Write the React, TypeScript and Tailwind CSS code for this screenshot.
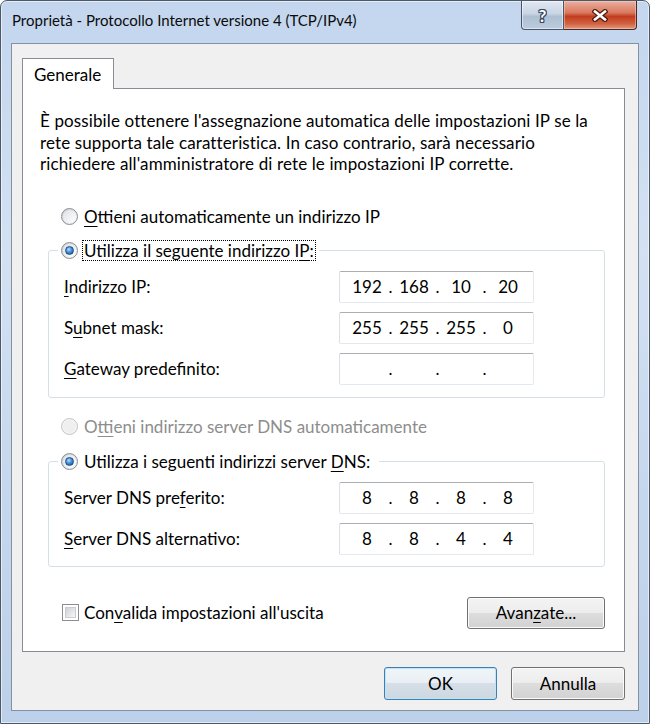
import React, { Fragment } from "react";

function U({ children }: { children: React.ReactNode }) {
  return <span className="underline decoration-1 underline-offset-[3px]">{children}</span>;
}

function Radio({ checked, disabled }: { checked?: boolean; disabled?: boolean }) {
  return (
    <span
      className={
        "flex h-[17px] w-[17px] shrink-0 items-center justify-center rounded-full border " +
        (disabled
          ? "border-[#c4c4c4] bg-[#f4f4f4]"
          : "border-[#8a8e94] bg-linear-to-br from-[#c7ccd2] to-[#fbfbfb]")
      }
    >
      <span
        className={
          "flex h-[13px] w-[13px] items-center justify-center rounded-full " +
          (disabled ? "bg-[#efefef]" : "bg-linear-to-br from-[#dfe1e4] to-[#ffffff]")
        }
      >
        {checked && (
          <span className="h-[9px] w-[9px] rounded-full border border-[#1b4f8c] bg-[radial-gradient(circle_at_40%_35%,#b9e2ff_0%,#4c95de_40%,#14498c_100%)]" />
        )}
      </span>
    </span>
  );
}

function Checkbox() {
  return (
    <span className="flex h-[17px] w-[17px] shrink-0 items-center justify-center border border-[#8a8e94] bg-white">
      <span className="block h-[11px] w-[11px] border border-[#c9ccd1] bg-linear-to-br from-[#cdd1d6] to-[#f7f7f7]" />
    </span>
  );
}

function IpBox({ v }: { v: string[] }) {
  return (
    <div className="flex h-[32px] w-[195px] items-center rounded-[2px] border border-[#abadb3] border-b-[#e3e9ef] border-l-[#dbdfe6] border-r-[#e3e9ef] bg-white pl-[9px]">
      {v.map((s, i) => (
        <Fragment key={i}>
          {i > 0 && <span className="w-[11px] text-center">.</span>}
          <span className="w-[36px] text-center">{s}</span>
        </Fragment>
      ))}
    </div>
  );
}

function Row({ label, v }: { label: React.ReactNode; v: string[] }) {
  return (
    <div className="flex items-center justify-between pl-[15px] pr-[70px]">
      <span>{label}</span>
      <IpBox v={v} />
    </div>
  );
}

function Btn({ children, def, w }: { children: React.ReactNode; def?: boolean; w: string }) {
  return (
    <div
      className={
        "flex h-[33px] items-center justify-center rounded-[3px] border " +
        w +
        " " +
        (def
          ? "border-[#3c7fb1] bg-[linear-gradient(#f0f5f9,#e8eef3_50%,#d6dfe7_50%,#ccd7e0)] shadow-[inset_0_0_0_1px_#bfe3f8]"
          : "border-[#707070] bg-[linear-gradient(#f4f4f4,#ececec_50%,#dddddd_50%,#d2d2d2)] shadow-[inset_0_0_0_1px_#fbfbfb]")
      }
    >
      {children}
    </div>
  );
}

export default function App() {
  return (
    <div className="h-[724px] w-[650px] overflow-hidden bg-white [font-family:Lato,sans-serif] text-[17px] leading-[21px] text-black">
      <div className="flex h-[724px] w-[650px] flex-col rounded-t-[7px] border border-[#4d5968] bg-[linear-gradient(180deg,#c3d6ee_0%,#d3e1f2_35%,#c5d7ed_70%,#bcd0e9_100%)] shadow-[inset_0_0_0_1px_rgba(255,255,255,0.55)]">
        {/* title bar */}
        <div className="flex h-[42px] items-start justify-between">
          <div className="mt-[9px] pl-[11px] text-[15px] text-[#0b0b0b]">
            Proprietà - Protocollo Internet versione 4 (TCP/IPv4)
          </div>
          <div className="mr-[12px] flex">
            <div className="flex h-[29px] w-[43px] items-center justify-center rounded-bl-[4px] border border-t-0 border-[#4a5668] bg-[linear-gradient(#e1e8f1,#c9d5e4_45%,#afbfd3_55%,#bccbdd)] shadow-[inset_0_0_0_1px_rgba(255,255,255,0.5)]">
              <span className="text-[17px] font-bold text-white [text-shadow:1px_0_0_#33475f,-1px_0_0_#33475f,0_1px_0_#33475f,0_-1px_0_#33475f,1px_1px_0_#33475f,-1px_-1px_0_#33475f,1px_-1px_0_#33475f,-1px_1px_0_#33475f]">
                ?
              </span>
            </div>
            <div className="flex h-[29px] w-[73px] items-center justify-center rounded-br-[4px] border border-l-0 border-t-0 border-[#4a2a22] bg-[linear-gradient(#eab0a1,#d9785e_42%,#c23d1f_55%,#d0603f_80%,#e09a7e)] shadow-[inset_0_0_0_1px_rgba(255,220,210,0.45)]">
              <svg width="16" height="13" viewBox="0 0 16 13">
                <path d="M3 2.5 L13 10.5 M13 2.5 L3 10.5" stroke="#4a1a10" strokeWidth="5" strokeLinecap="square" />
                <path d="M3 2.5 L13 10.5 M13 2.5 L3 10.5" stroke="#ffffff" strokeWidth="2.6" strokeLinecap="square" />
              </svg>
            </div>
          </div>
        </div>

        {/* client area */}
        <div className="mx-[10px] flex h-[668px] flex-col border border-[#8391a3] bg-[#f0f0f0] pl-[10px] pr-[13px] pt-[14px]">
          {/* tab */}
          <div className="relative z-10 -mb-px flex h-[31px] w-[92px] items-center border border-b-0 border-[#898c95] bg-white pl-[11px]">
            Generale
          </div>
          {/* panel */}
          <div className="flex h-[564px] flex-col border border-[#898c95] bg-white">
            <p className="pl-[17px] pt-[21px] leading-[21.5px] tracking-[0.12px]">
              È possibile ottenere l'assegnazione automatica delle impostazioni IP se la
              <br />
              rete supporta tale caratteristica. In caso contrario, sarà necessario
              <br />
              richiedere all'amministratore di rete le impostazioni IP corrette.
            </p>

            <div className="mt-[31px] flex h-[21px] items-center gap-[6px] pl-[38px]">
              <Radio />
              <span>
                <U>O</U>ttieni automaticamente un indirizzo IP
              </span>
            </div>

            <fieldset className="mb-0 ml-[25px] mr-[19px] mt-[13px] rounded-[3px] border border-[#d5dfe5] px-0 pb-[12px] pt-[10px]">
              <legend className="ml-[9px] px-[3px]">
                <div className="flex h-[21px] items-center gap-[4px]">
                  <Radio checked />
                  <span className="border border-dotted border-[#000] px-[1px] leading-[19px]">
                    Utilizza il seguente indirizzo I<U>P</U>:
                  </span>
                </div>
              </legend>
              <div className="flex flex-col gap-[9px]">
                <Row label={<><U>I</U>ndirizzo IP:</>} v={["192", "168", "10", "20"]} />
                <Row label={<>S<U>u</U>bnet mask:</>} v={["255", "255", "255", "0"]} />
                <Row label={<><U>G</U>ateway predefinito:</>} v={["", "", "", ""]} />
              </div>
            </fieldset>

            <div className="mt-[18px] flex h-[21px] items-center gap-[6px] pl-[38px] text-[#8d8d8d]">
              <Radio disabled />
              <span>
                O<U>t</U>tieni indirizzo server DNS automaticamente
              </span>
            </div>

            <fieldset className="ml-[25px] mr-[19px] mt-[14px] rounded-[3px] border border-[#d5dfe5] px-0 pb-[11px] pt-[10px]">
              <legend className="ml-[9px] px-[3px]">
                <div className="flex h-[21px] items-center gap-[6px] pr-[6px]">
                  <Radio checked />
                  <span>
                    Utilizza i seguenti indirizzi server <U>D</U>NS:
                  </span>
                </div>
              </legend>
              <div className="flex flex-col gap-[9px]">
                <Row label={<>Server DNS pre<U>f</U>erito:</>} v={["8", "8", "8", "8"]} />
                <Row label={<><U>S</U>erver DNS alternativo:</>} v={["8", "8", "4", "4"]} />
              </div>
            </fieldset>

            <div className="mt-[30px] flex h-[32px] items-center justify-between pl-[39px] pr-[19px]">
              <div className="flex items-center gap-[5px]">
                <Checkbox />
                <span>
                  Con<U>v</U>alida impostazioni all'uscita
                </span>
              </div>
              <div className="flex h-[32px] w-[138px] items-center justify-center rounded-[3px] border border-[#707070] bg-[linear-gradient(#f4f4f4,#ececec_50%,#dddddd_50%,#d2d2d2)] shadow-[inset_0_0_0_1px_#fbfbfb]">
                <span>
                  Avan<U>z</U>ate...
                </span>
              </div>
            </div>
          </div>

          {/* dialog buttons */}
          <div className="mt-[15px] flex justify-end gap-[14px]">
            <Btn def w="w-[113px]">OK</Btn>
            <Btn w="w-[114px]">Annulla</Btn>
          </div>
        </div>
      </div>
    </div>
  );
}
